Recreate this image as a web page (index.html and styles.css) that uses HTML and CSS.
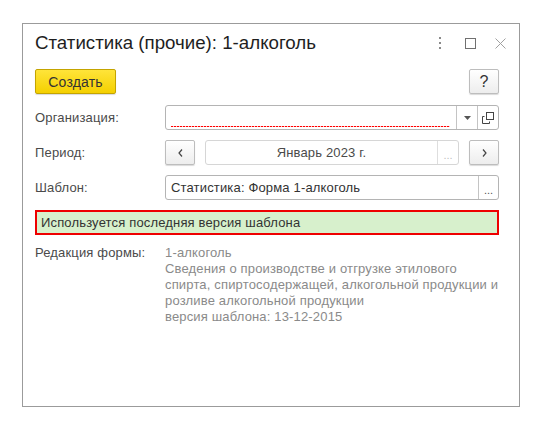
FILE: index.html
```html
<!DOCTYPE html>
<html lang="ru">
<head>
    <meta charset="UTF-8">
    <title>Статистика (прочие): 1-алкоголь</title>
    <link rel="stylesheet" href="styles.css">
</head>
<body>
    <div class="window">
        <div class="titlebar">
            <h1 class="title">Статистика (прочие): 1-алкоголь</h1>
            <div class="win-actions">
                <span class="win-btn">
                    <svg width="4" height="12" viewBox="0 0 4 12"><rect x="1" y="0" width="2" height="2" fill="#8a8a8a"/><rect x="1" y="5" width="2" height="2" fill="#8a8a8a"/><rect x="1" y="10" width="2" height="2" fill="#8a8a8a"/></svg>
                </span>
                <span class="win-btn">
                    <svg width="11" height="11" viewBox="0 0 11 11"><rect x="0.5" y="0.5" width="10" height="10" fill="none" stroke="#707070"/></svg>
                </span>
                <span class="win-btn">
                    <svg width="11" height="11" viewBox="0 0 11 11"><path d="M0.5 0.5 L10.5 10.5 M10.5 0.5 L0.5 10.5" stroke="#a0a0a0" stroke-width="1"/></svg>
                </span>
            </div>
        </div>

        <div class="toolbar">
            <button class="btn-create">Создать</button>
            <button class="btn btn-help">?</button>
        </div>

        <div class="form-row">
            <label class="field-label">Организация:</label>
            <div class="field">
                <div class="field-value"><span class="required-line"></span></div>
                <span class="field-btn">
                    <svg width="7" height="4" viewBox="0 0 7 4"><path d="M0 0 H7 L3.5 4 Z" fill="#555"/></svg>
                </span>
                <span class="field-btn">
                    <svg width="12" height="12" viewBox="0 0 12 12"><rect x="4.5" y="0.5" width="7" height="7" fill="none" stroke="#444"/><path d="M0.5 4.5 V11.5 H7.5" fill="none" stroke="#444"/><path d="M0.5 4.5 H2.5 M7.5 9.5 V11.5" stroke="#444"/></svg>
                </span>
            </div>
        </div>

        <div class="form-row">
            <label class="field-label">Период:</label>
            <div class="period">
                <button class="btn btn-nav">
                    <svg width="5" height="8" viewBox="0 0 5 8"><path d="M4 0.5 L1 4 L4 7.5" fill="none" stroke="#444" stroke-width="1.2"/></svg>
                </button>
                <div class="field field-light">
                    <div class="field-value field-center">Январь 2023 г.</div>
                    <span class="field-btn field-btn-light">...</span>
                </div>
                <button class="btn btn-nav">
                    <svg width="5" height="8" viewBox="0 0 5 8"><path d="M1 0.5 L4 4 L1 7.5" fill="none" stroke="#444" stroke-width="1.2"/></svg>
                </button>
            </div>
        </div>

        <div class="form-row">
            <label class="field-label">Шаблон:</label>
            <div class="field">
                <div class="field-value">Статистика: Форма 1-алкоголь</div>
                <span class="field-btn field-btn-dots">...</span>
            </div>
        </div>

        <div class="notice">Используется последняя версия шаблона</div>

        <div class="info-row">
            <div class="field-label">Редакция формы:</div>
            <div class="info-text">
                <div>1-алкоголь</div>
                <div>Сведения о производстве и отгрузке этилового</div>
                <div>спирта, спиртосодержащей, алкогольной продукции и</div>
                <div>розливе алкогольной продукции</div>
                <div>версия шаблона: 13-12-2015</div>
            </div>
        </div>
    </div>
</body>
</html>
```

FILE: styles.css
```css
body {
    margin: 0;
    background-color: #fff;
    font-family: "Liberation Sans", Arial, sans-serif;
    font-size: 13px;
    letter-spacing: 0.16px;
    color: #333;
}

.window {
    box-sizing: border-box;
    margin: 23px 0 0 22px;
    width: 498px;
    height: 384px;
    border: 1px solid #9b9b9b;
    padding: 0 20px 0 12px;
    background-color: #fff;
}

.titlebar {
    display: flex;
    align-items: center;
    justify-content: space-between;
    padding-top: 7px;
    margin-right: -16px;
}

.title {
    margin: 0;
    font-size: 18.7px;
    font-weight: normal;
    letter-spacing: 0;
    line-height: 24px;
    color: #1e1e1e;
}

.win-actions {
    display: flex;
}

.win-btn {
    width: 30px;
    height: 24px;
    display: flex;
    align-items: center;
    justify-content: center;
}

.toolbar {
    display: flex;
    justify-content: space-between;
    margin-top: 14px;
}

button {
    font-family: inherit;
    letter-spacing: inherit;
    padding: 0;
    cursor: pointer;
}

.btn-create {
    box-sizing: border-box;
    width: 81px;
    height: 25px;
    border: 1px solid #c4a400;
    border-radius: 2px;
    background: linear-gradient(#ffe43a, #f4d000);
    font-size: 14px;
    color: #333;
    box-shadow: 0 1px 1px rgba(0, 0, 0, 0.15);
}

.btn {
    box-sizing: border-box;
    height: 25px;
    border: 1px solid #bdbdbd;
    border-radius: 2px;
    background: linear-gradient(#fff, #ededed);
    box-shadow: 0 1px 1px rgba(0, 0, 0, 0.15);
    display: flex;
    align-items: center;
    justify-content: center;
    color: #333;
}

.btn-help {
    width: 30px;
    font-size: 16px;
}

.btn-nav {
    width: 30px;
    flex: none;
}

.form-row {
    display: grid;
    grid-template-columns: 130px 1fr;
    align-items: center;
    margin-top: 11px;
}

.form-row + .form-row {
    margin-top: 10px;
}

.field-label {
    color: #4a4a4a;
}

.field {
    box-sizing: border-box;
    height: 25px;
    display: flex;
    border: 1px solid #b4b4b4;
    border-radius: 3px;
    background-color: #fff;
}

.field-light {
    flex: 1;
    border-color: #d6d6d6;
}

.field-value {
    flex: 1;
    display: flex;
    align-items: center;
    padding: 0 5px;
    color: #333;
    white-space: nowrap;
}

.field-center {
    justify-content: center;
    color: #4a4a4a;
}

.required-line {
    align-self: flex-end;
    flex: 1;
    height: 1px;
    margin: 0 1px 2px 0;
    background-image: linear-gradient(to right, #ff0000 66%, rgba(255, 160, 160, 0.6) 66%);
    background-size: 3px 1px;
    background-repeat: repeat-x;
}

.field-btn {
    width: 20px;
    flex: none;
    border-left: 1px solid #c4c4c4;
    display: flex;
    align-items: center;
    justify-content: center;
    color: #555;
}

.field-btn-dots {
    align-items: flex-end;
    padding-bottom: 5px;
    box-sizing: border-box;
    font-size: 11px;
    line-height: 8px;
    letter-spacing: 0;
}

.field-btn-light {
    border-left-color: #dedede;
    color: #c0c0c0;
    align-items: flex-end;
    padding-bottom: 5px;
    box-sizing: border-box;
    font-size: 11px;
    line-height: 8px;
    letter-spacing: 0;
    width: 21px;
}

.period {
    display: flex;
    gap: 10px;
}

.notice {
    box-sizing: border-box;
    height: 25px;
    margin-top: 10px;
    padding: 0 4px;
    display: flex;
    align-items: center;
    border: 2px solid #ee0000;
    background-color: #d7f0cc;
    color: #333;
}

.info-row {
    display: grid;
    grid-template-columns: 130px 1fr;
    margin-top: 10px;
    line-height: 16px;
}

.info-text {
    color: #8a8a8a;
    white-space: nowrap;
}
```
